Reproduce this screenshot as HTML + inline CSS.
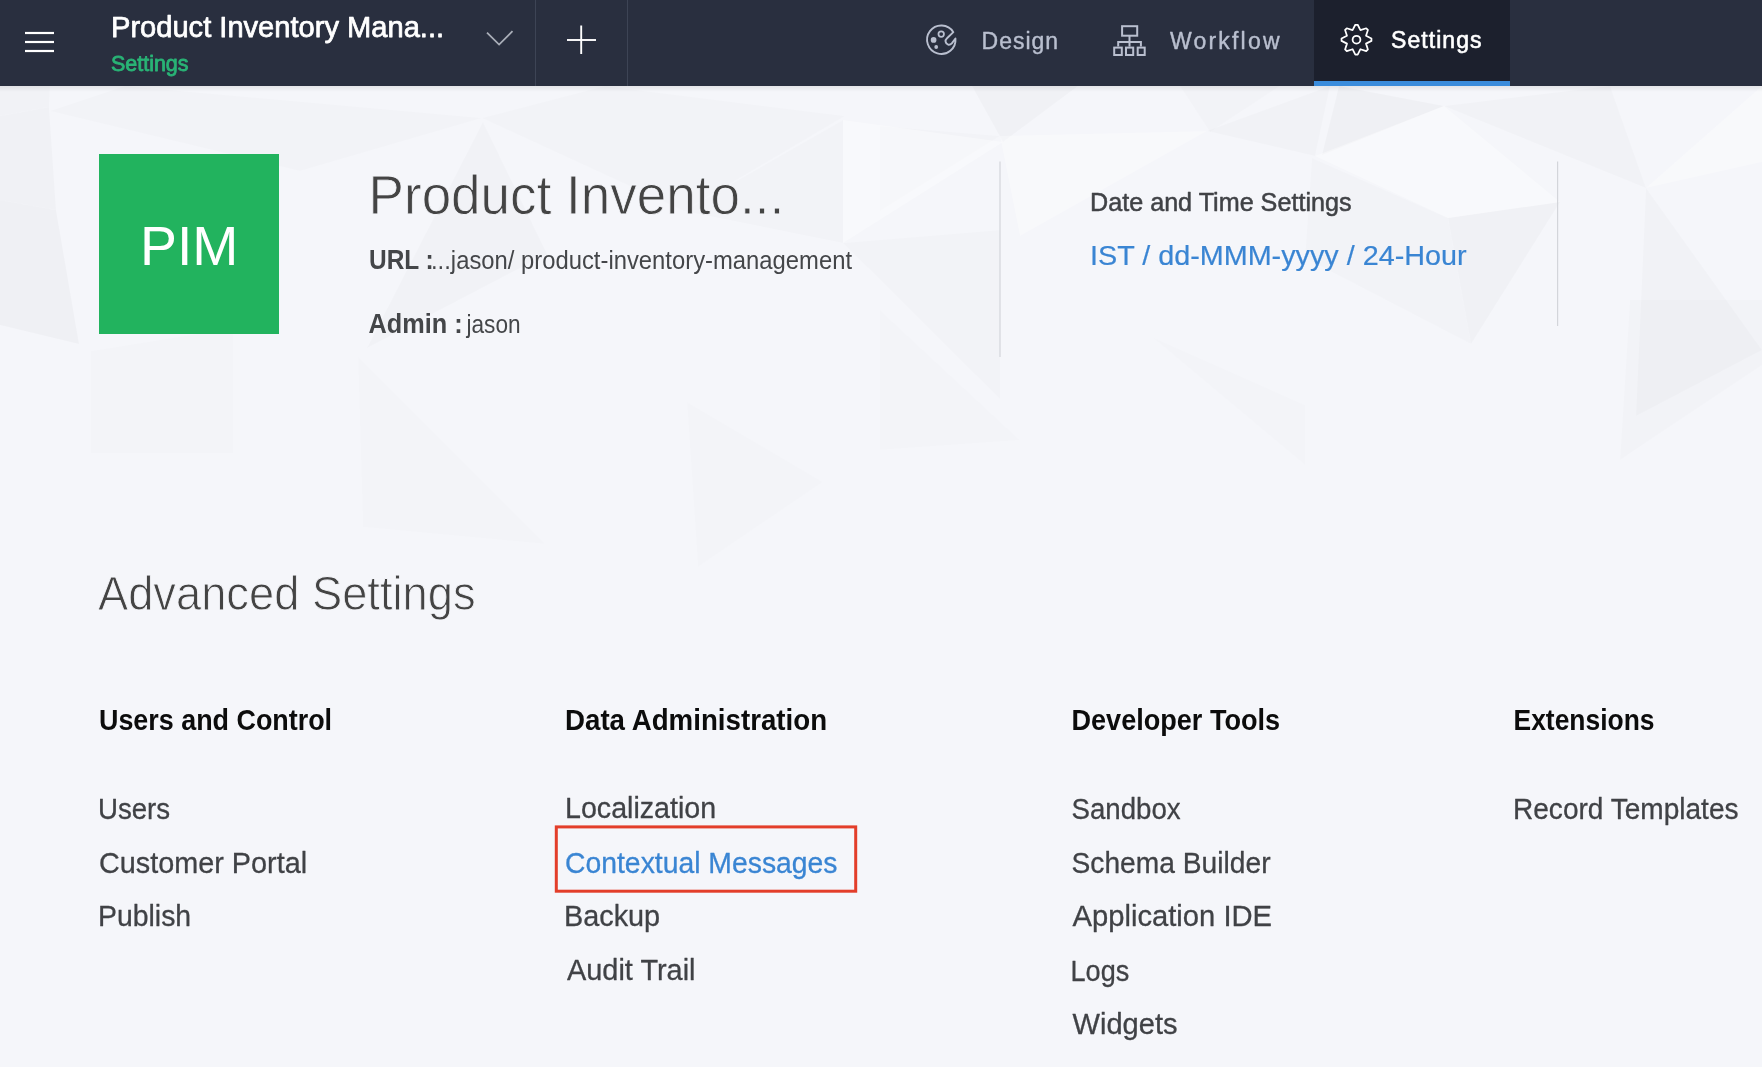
<!DOCTYPE html>
<html><head><meta charset="utf-8"><title>Settings</title>
<style>html,body{margin:0;padding:0;width:1762px;height:1067px;overflow:hidden;background:#f5f6fa;font-family:"Liberation Sans",sans-serif}</style>
</head><body>
<svg width="1762" height="1067" viewBox="0 0 1762 1067" font-family="Liberation Sans, sans-serif" style="position:absolute;left:0;top:0;display:block;will-change:transform">
<rect x="0" y="0" width="1762" height="1067" fill="#f5f6fa"/>
<defs><linearGradient id="hs" x1="0" y1="0" x2="0" y2="1"><stop offset="0" stop-color="#000" stop-opacity="0.07"/><stop offset="1" stop-color="#000" stop-opacity="0"/></linearGradient></defs>
<polygon points="0,86 50,86 49,107 0,116" fill="#000" fill-opacity="0.015"/>
<polygon points="0,116 49,107 56,210 0,200" fill="#000" fill-opacity="0.018"/>
<polygon points="0,200 56,210 79,344 0,325" fill="#000" fill-opacity="0.025"/>
<polygon points="91,351 233,328 233,453 91,453" fill="#000" fill-opacity="0.006"/>
<polygon points="358,357 545,544 363,527" fill="#000" fill-opacity="0.006"/>
<polygon points="687,402 823,482 698,567" fill="#000" fill-opacity="0.006"/>
<polygon points="483,122 367,348 547,254" fill="#000" fill-opacity="0.015"/>
<polygon points="684,211 843,120 843,243" fill="#000" fill-opacity="0.012"/>
<polygon points="972,86 1078,86 1003,142" fill="#000" fill-opacity="0.020"/>
<polygon points="843,243 1000,230 1000,399" fill="#000" fill-opacity="0.012"/>
<polygon points="880,310 1020,440 880,450" fill="#000" fill-opacity="0.006"/>
<polygon points="1152,337 1305,405 1305,465" fill="#000" fill-opacity="0.006"/>
<polygon points="1322,155 1339,86 1444,106" fill="#000" fill-opacity="0.022"/>
<polygon points="1444,106 1610,86 1646,188" fill="#000" fill-opacity="0.015"/>
<polygon points="1448,218 1560,202 1471,344" fill="#000" fill-opacity="0.020"/>
<polygon points="1312,158 1448,218 1471,344 1305,258" fill="#000" fill-opacity="0.012"/>
<polygon points="1646,188 1762,350 1636,416" fill="#000" fill-opacity="0.015"/>
<polygon points="1180,86 1280,86 1210,132" fill="#000" fill-opacity="0.010"/>
<polygon points="1630,300 1762,300 1762,365 1620,460" fill="#000" fill-opacity="0.010"/>
<polygon points="1207,131 1330,86 1315,156" fill="#000" fill-opacity="0.016"/>
<polygon points="880,126 1000,136 880,211" fill="#000" fill-opacity="0.010"/>
<polygon points="125,86 482,118 300,171 50,111" fill="#000" fill-opacity="0.012"/>
<polygon points="605,86 845,116 684,211 482,118" fill="#000" fill-opacity="0.010"/>
<polygon points="843,120 1003,142 843,243" fill="#fff" fill-opacity="0.350"/>
<polygon points="1444,106 1560,202 1448,218 1315,156" fill="#fff" fill-opacity="0.350"/>
<polygon points="1646,188 1762,86 1762,162" fill="#fff" fill-opacity="0.300"/>
<polygon points="1000,136 1207,131 1020,236" fill="#fff" fill-opacity="0.300"/>
<rect x="0" y="86" width="1762" height="6" fill="url(#hs)"/>
<rect x="0" y="0" width="1762" height="86" fill="#292f3f"/>
<rect x="1314" y="0" width="196" height="86" fill="#1c202d"/>
<rect x="1314" y="81" width="196" height="5" fill="#3a8cdc"/>
<line x1="535.5" y1="0" x2="535.5" y2="86" stroke="#3d4455" stroke-width="1"/>
<line x1="627.5" y1="0" x2="627.5" y2="86" stroke="#3d4455" stroke-width="1"/>
<g stroke="#ffffff" stroke-width="2.2" fill="none">
 <line x1="25" y1="33" x2="54" y2="33"/><line x1="25" y1="42" x2="54" y2="42"/><line x1="25" y1="51" x2="54" y2="51"/>
</g>
<polyline points="487,32.6 499.1,44.6 512.5,31.2" stroke="#a9aeb8" stroke-width="1.8" fill="none"/>
<g stroke="#ffffff" stroke-width="1.9"><line x1="567" y1="40" x2="596" y2="40"/><line x1="581.2" y1="25.5" x2="581.2" y2="54"/></g>
<!-- palette -->
<g stroke="#b9bfcf" stroke-width="1.9" fill="none" stroke-linejoin="round">
 <path d="M953.34,32.18 A14.2,14.2 0 1 0 955.45,38.46 L951.8,43.4 C949.5,45.8 946.2,44.8 945.6,41.8 C945.3,40.4 945.9,39.3 947,38.3 Z"/>
 <circle cx="941.2" cy="34.0" r="2.75" stroke-width="1.75"/>
</g>
<circle cx="933.6" cy="39.9" r="2.85" fill="#b9bfcf"/>
<circle cx="936.2" cy="47.0" r="1.9" fill="#b9bfcf"/>
<!-- workflow -->
<g stroke="#b9bfcf" stroke-width="2" fill="none">
 <rect x="1122.1" y="26.2" width="15.1" height="9.5"/>
 <line x1="1129.5" y1="35.7" x2="1129.5" y2="46.6"/>
 <polyline points="1118.2,46.6 1118.2,41.9 1140.9,41.9 1140.9,46.6"/>
 <rect x="1114.2" y="47.6" width="7.6" height="7.4"/>
 <rect x="1126" y="47.6" width="7.2" height="7.4"/>
 <rect x="1137.7" y="47.6" width="7.0" height="7.4"/>
</g>
<!-- gear -->
<path id="gear" d="M1355.32,24.75 L1357.68,24.75 L1360.44,30.18 L1366.24,28.29 L1367.91,29.96 L1366.02,35.76 L1371.45,38.52 L1371.45,40.88 L1366.02,43.64 L1367.91,49.44 L1366.24,51.11 L1360.44,49.22 L1357.68,54.65 L1355.32,54.65 L1352.56,49.22 L1346.76,51.11 L1345.09,49.44 L1346.98,43.64 L1341.55,40.88 L1341.55,38.52 L1346.98,35.76 L1345.09,29.96 L1346.76,28.29 L1352.56,30.18 Z" stroke="#ffffff" stroke-width="1.75" stroke-linejoin="round" fill="none"/>
<circle cx="1356.5" cy="39.7" r="3.9" stroke="#ffffff" stroke-width="1.8" fill="none"/>
<rect x="99" y="154" width="180" height="180" fill="#22b35e"/>
<line x1="1000" y1="161.5" x2="1000" y2="357" stroke="#d3d5da" stroke-width="1.2"/>
<line x1="1557.6" y1="161.5" x2="1557.6" y2="326" stroke="#d3d5da" stroke-width="1.2"/>
<rect x="556.3" y="826.9" width="299.4" height="64.3" fill="none" stroke="#e33e2a" stroke-width="3"/>
<text x="111.00" y="37" font-size="29.5" font-weight="normal" textLength="333.05" lengthAdjust="spacingAndGlyphs" fill="#ffffff" stroke="#ffffff" stroke-width="0.75" stroke-linejoin="round">Product Inventory Mana...</text>
<text x="111.00" y="71" font-size="21.5" font-weight="normal" textLength="77.56" lengthAdjust="spacing" fill="#29b476" stroke="#29b476" stroke-width="0.8" stroke-linejoin="round">Settings</text>
<text x="981.50" y="48.8" font-size="23" font-weight="normal" textLength="76.65" lengthAdjust="spacing" fill="#b9bfcf" stroke="#b9bfcf" stroke-width="0.4" stroke-linejoin="round">Design</text>
<text x="1170.00" y="48.6" font-size="23" font-weight="normal" textLength="109.54" lengthAdjust="spacing" fill="#b9bfcf" stroke="#b9bfcf" stroke-width="0.4" stroke-linejoin="round">Workflow</text>
<text x="1391.00" y="48.4" font-size="23" font-weight="normal" textLength="90.57" lengthAdjust="spacing" fill="#ffffff" stroke="#ffffff" stroke-width="0.6" stroke-linejoin="round">Settings</text>
<text x="140.00" y="265" font-size="56" font-weight="normal" textLength="98.38" lengthAdjust="spacingAndGlyphs" fill="#ffffff">PIM</text>
<text x="368.60" y="213.6" font-size="55.5" font-weight="normal" textLength="415.68" lengthAdjust="spacingAndGlyphs" fill="#444444" stroke="#f5f6fa" stroke-width="0.8">Product Invento...</text>
<text x="369.00" y="268.7" font-size="27.2" font-weight="bold" textLength="64.73" lengthAdjust="spacingAndGlyphs" fill="#444649">URL :</text>
<text x="431.00" y="268.7" font-size="25.5" font-weight="normal" textLength="421.02" lengthAdjust="spacingAndGlyphs" fill="#444649">...jason/ product-inventory-management</text>
<text x="368.50" y="333.3" font-size="27.2" font-weight="bold" textLength="94.10" lengthAdjust="spacingAndGlyphs" fill="#444649">Admin :</text>
<text x="466.50" y="333.3" font-size="25.5" font-weight="normal" textLength="54.10" lengthAdjust="spacingAndGlyphs" fill="#444649">jason</text>
<text x="1090.00" y="211.2" font-size="25.1" font-weight="normal" textLength="261.54" lengthAdjust="spacingAndGlyphs" fill="#404246" stroke="#404246" stroke-width="0.5" stroke-linejoin="round">Date and Time Settings</text>
<text x="1090.00" y="265.0" font-size="28" font-weight="normal" textLength="376.53" lengthAdjust="spacingAndGlyphs" fill="#3a85d3" stroke="#3a85d3" stroke-width="0.2" stroke-linejoin="round">IST / dd-MMM-yyyy / 24-Hour</text>
<text x="98.00" y="609.8" font-size="48" font-weight="normal" textLength="377.52" lengthAdjust="spacingAndGlyphs" fill="#444444" stroke="#f5f6fa" stroke-width="0.9">Advanced Settings</text>
<text x="99.00" y="729.6" font-size="30" font-weight="bold" textLength="233.08" lengthAdjust="spacingAndGlyphs" fill="#0c0c0c">Users and Control</text>
<text x="565.00" y="729.6" font-size="30" font-weight="bold" textLength="262.05" lengthAdjust="spacingAndGlyphs" fill="#0c0c0c">Data Administration</text>
<text x="1071.50" y="729.6" font-size="30" font-weight="bold" textLength="208.55" lengthAdjust="spacingAndGlyphs" fill="#0c0c0c">Developer Tools</text>
<text x="1513.50" y="729.6" font-size="30" font-weight="bold" textLength="141.07" lengthAdjust="spacingAndGlyphs" fill="#0c0c0c">Extensions</text>
<text x="98.00" y="818.5" font-size="30" font-weight="normal" textLength="72.13" lengthAdjust="spacingAndGlyphs" fill="#404246" stroke="#404246" stroke-width="0.3" stroke-linejoin="round">Users</text>
<text x="99.00" y="872.6" font-size="30" font-weight="normal" textLength="208.08" lengthAdjust="spacingAndGlyphs" fill="#404246" stroke="#404246" stroke-width="0.3" stroke-linejoin="round">Customer Portal</text>
<text x="98.00" y="926.3" font-size="30" font-weight="normal" textLength="93.14" lengthAdjust="spacingAndGlyphs" fill="#404246" stroke="#404246" stroke-width="0.3" stroke-linejoin="round">Publish</text>
<text x="565.00" y="818.3" font-size="30" font-weight="normal" textLength="151.10" lengthAdjust="spacingAndGlyphs" fill="#404246" stroke="#404246" stroke-width="0.3" stroke-linejoin="round">Localization</text>
<text x="565.00" y="872.6" font-size="30" font-weight="normal" textLength="272.54" lengthAdjust="spacingAndGlyphs" fill="#3a85d3" stroke="#3a85d3" stroke-width="0.3" stroke-linejoin="round">Contextual Messages</text>
<text x="564.00" y="926.3" font-size="30" font-weight="normal" textLength="96.17" lengthAdjust="spacingAndGlyphs" fill="#404246" stroke="#404246" stroke-width="0.3" stroke-linejoin="round">Backup</text>
<text x="567.00" y="980.4" font-size="30" font-weight="normal" textLength="128.55" lengthAdjust="spacingAndGlyphs" fill="#404246" stroke="#404246" stroke-width="0.3" stroke-linejoin="round">Audit Trail</text>
<text x="1071.50" y="818.5" font-size="30" font-weight="normal" textLength="109.13" lengthAdjust="spacingAndGlyphs" fill="#404246" stroke="#404246" stroke-width="0.3" stroke-linejoin="round">Sandbox</text>
<text x="1071.50" y="872.6" font-size="30" font-weight="normal" textLength="199.04" lengthAdjust="spacingAndGlyphs" fill="#404246" stroke="#404246" stroke-width="0.3" stroke-linejoin="round">Schema Builder</text>
<text x="1072.50" y="926.3" font-size="30" font-weight="normal" textLength="199.54" lengthAdjust="spacingAndGlyphs" fill="#404246" stroke="#404246" stroke-width="0.3" stroke-linejoin="round">Application IDE</text>
<text x="1070.50" y="980.5" font-size="30" font-weight="normal" textLength="58.74" lengthAdjust="spacingAndGlyphs" fill="#404246" stroke="#404246" stroke-width="0.3" stroke-linejoin="round">Logs</text>
<text x="1072.50" y="1034.3" font-size="30" font-weight="normal" textLength="105.03" lengthAdjust="spacingAndGlyphs" fill="#404246" stroke="#404246" stroke-width="0.3" stroke-linejoin="round">Widgets</text>
<text x="1513.00" y="818.5" font-size="30" font-weight="normal" textLength="225.54" lengthAdjust="spacingAndGlyphs" fill="#404246" stroke="#404246" stroke-width="0.3" stroke-linejoin="round">Record Templates</text>
</svg>
</body></html>
